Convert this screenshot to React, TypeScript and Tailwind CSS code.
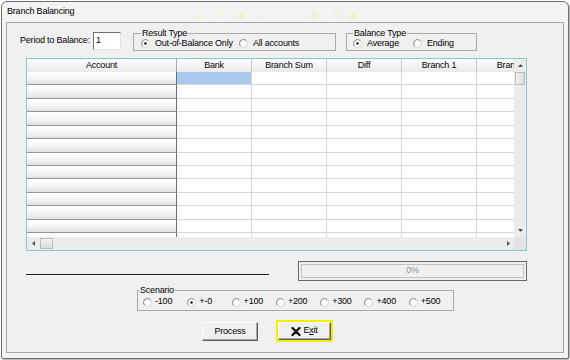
import React from "react";

const columns = ["Bank", "Branch Sum", "Diff", "Branch 1", "Branch 2"];
const rows = Array.from({ length: 13 }, (_, i) => i);
const scenarios = ["-100", "+-0", "+100", "+200", "+300", "+400", "+500"];

// classic sunken radio, dark on the top-left, light on the bottom-right
const Radio = ({ checked }: { checked?: boolean }) => (
  <svg width="9" height="9" viewBox="0 0 9 9" className="shrink-0">
    <circle cx="4.5" cy="4.5" r="3.6" fill="#fff" />
    <path d="M1.67 7.33 A4 4 0 0 1 7.33 1.67" fill="none" stroke="#7c7c7c" />
    <path d="M7.33 1.67 A4 4 0 0 1 1.67 7.33" fill="none" stroke="#d6d6d6" />
    {checked && <circle cx="4.5" cy="4.5" r="1.3" fill="#1c1c1c" />}
  </svg>
);

const Group = ({
  title,
  className,
  children,
}: {
  title: string;
  className: string;
  children: React.ReactNode;
}) => (
  <fieldset className={`border border-[#a9a9a9] ${className}`}>
    <legend className="px-[1px] leading-[10px]">{title}</legend>
    {children}
  </fieldset>
);

const Tri = ({ dir }: { dir: "up" | "down" | "left" | "right" }) => {
  const pts = {
    up: "0,3 2.5,0 5,3",
    down: "0,0 5,0 2.5,3",
    left: "3,0 3,5 0,2.5",
    right: "0,0 0,5 3,2.5",
  }[dir];
  const vertical = dir === "up" || dir === "down";
  return (
    <svg width={vertical ? 5 : 3} height={vertical ? 3 : 5}>
      <polygon points={pts} fill="#505050" />
    </svg>
  );
};

const Grid = () => (
  <div className="ml-[19px] w-[501px] h-[193px] shrink-0 border border-[#86c8cb] bg-white flex flex-col">
    <div className="flex h-[178px]">
      <div className="w-[487px] overflow-hidden flex flex-col">
        {/* header */}
        <div className="flex h-[13px] shrink-0">
          <div className="w-[150px] shrink-0 border-r border-[#a8a8a8] bg-linear-to-b from-white to-[#e9e9e9] text-center leading-[13px]">
            Account
          </div>
          {columns.map((c) => (
            <div
              key={c}
              className="w-[75px] shrink-0 border-r border-[#c8c8c8] bg-linear-to-b from-white to-[#e9e9e9] text-center leading-[13px] whitespace-nowrap"
            >
              {c}
            </div>
          ))}
        </div>
        {rows.map((r) => (
          <div key={r} className="flex h-[13.43px] shrink-0">
            <div className="w-[150px] shrink-0 border-r border-r-[#6c6c6c] border-b border-b-[#949494] bg-linear-to-b from-white via-[#f6f6f6] to-[#e2e2e2]" />
            {columns.map((c, i) => (
              <div
                key={c}
                className={`w-[75px] shrink-0 border-r border-b border-[#d6d6d6] ${
                  r === 0 && i === 0 ? "bg-[#a8c8ec]" : "bg-white"
                }`}
              />
            ))}
          </div>
        ))}
      </div>
      {/* vertical scrollbar */}
      <div className="w-[12px] bg-[#ececec] flex flex-col">
        <div className="h-[13px] flex items-center justify-center">
          <Tri dir="up" />
        </div>
        <div className="h-[13px] mx-[1px] border border-[#bcbcbc] bg-linear-to-r from-[#f2f2f2] to-[#dcdcdc]" />
        <div className="flex-1" />
        <div className="h-[13px] flex items-center justify-center">
          <Tri dir="down" />
        </div>
      </div>
    </div>
    {/* horizontal scrollbar */}
    <div className="flex h-[13px] bg-[#ececec]">
      <div className="w-[12px] flex items-center justify-center">
        <Tri dir="left" />
      </div>
      <div className="ml-[1px] w-[13px] my-[1px] border border-[#bcbcbc] bg-linear-to-b from-[#f2f2f2] to-[#dcdcdc]" />
      <div className="flex-1" />
      <div className="w-[12px] flex items-center justify-center">
        <Tri dir="right" />
      </div>
      <div className="w-[12px] bg-[#e4e4e4]" />
    </div>
  </div>
);

const RaisedButton = ({ className, children }: { className: string; children: React.ReactNode }) => (
  <div
    className={`bg-[#f0f0f0] border border-t-[#fcfcfc] border-l-[#fcfcfc] border-r-[#5e5e5e] border-b-[#5e5e5e] shadow-[inset_-1px_-1px_0_#a3a3a3] flex items-center justify-center ${className}`}
  >
    {children}
  </div>
);

export default function App() {
  return (
    <div className="w-[570px] h-[360px] bg-white overflow-hidden font-['Liberation_Sans',Arial,sans-serif] text-[9px] tracking-[-0.2px] text-black">
      <div className="ml-[1px] mt-[1px] w-[568px] h-[358px] border border-[#6e6e6e] rounded-t-[6px] rounded-b-[2px] bg-[#f3f3f3] shadow-[1px_1px_1px_#b4b4b4] flex flex-col px-[4px] pb-[5px]">
        {/* title bar, with the faint desktop showing through the glass */}
        <div className="relative h-[20px] shrink-0 flex items-center pl-[1px]">
          <span>Branch Balancing</span>
          <span className="absolute left-[191px] top-[12px] w-[5px] h-[5px] rounded-full bg-[#f2eca8] blur-[1.5px] opacity-60" />
          <span className="absolute left-[212px] top-[9px] w-[5px] h-[5px] rounded-full bg-[#f3eeb6] blur-[1.5px] opacity-50" />
          <span className="absolute left-[232px] top-[11px] w-[6px] h-[6px] rounded-full bg-[#f1eaa2] blur-[1.5px] opacity-60" />
          <span className="absolute left-[252px] top-[13px] w-[5px] h-[5px] rounded-full bg-[#f3eeb6] blur-[1.5px] opacity-50" />
          <span className="absolute left-[305px] top-[11px] w-[6px] h-[6px] rounded-full bg-[#f1ea9e] blur-[1.5px] opacity-60" />
          <span className="absolute left-[327px] top-[8px] w-[8px] h-[8px] rounded-full border border-[#ece6b0] blur-[1px] opacity-60" />
          <span className="absolute left-[344px] top-[11px] w-[6px] h-[7px] rounded-full bg-[#f1ea9e] blur-[1.5px] opacity-60" />
        </div>

        {/* client area */}
        <div className="flex-1 border border-[#a2a8ae] bg-[#f0f0f0] flex flex-col">
          <div className="flex items-start mt-[5px] h-[23px] shrink-0">
            <div className="ml-[13px] w-[73px] h-[18px] mt-[4px] flex items-center">Period to Balance:</div>
            <div className="w-[28px] h-[18px] mt-[4px] bg-white border border-t-[#6f6f6f] border-l-[#6f6f6f] border-r-[#e2e2e2] border-b-[#e2e2e2] flex items-center pl-[2px]">
              1
            </div>
            <Group title="Result Type" className="ml-[12px] w-[203px] h-[23px] pl-[7px]">
              <div className="flex items-center h-[11px]">
                <div className="w-[98px] flex items-center gap-[5px]">
                  <Radio checked />
                  <span>Out-of-Balance Only</span>
                </div>
                <div className="flex items-center gap-[5px]">
                  <Radio />
                  <span>All accounts</span>
                </div>
              </div>
            </Group>
            <Group title="Balance Type" className="ml-[10px] w-[131px] h-[23px] pl-[6px]">
              <div className="flex items-center h-[11px]">
                <div className="w-[60px] flex items-center gap-[5px]">
                  <Radio checked />
                  <span>Average</span>
                </div>
                <div className="flex items-center gap-[5px]">
                  <Radio />
                  <span>Ending</span>
                </div>
              </div>
            </Group>
          </div>

          <div className="mt-[7px]">
            <Grid />
          </div>

          <div className="flex items-start mt-[10px] h-[20px] shrink-0">
            <div className="ml-[19px] w-[243px] mt-[13px] h-[1px] bg-[#1e1e1e] shadow-[0_1px_0_#fff]" />
            <div className="ml-[29px] w-[229px] h-[20px] border border-[#6a6a6a] p-[2px]">
              <div className="h-full border border-[#c2c2c2] bg-[#f0f0f0] flex items-center justify-center text-[#7a97aa]">
                0%
              </div>
            </div>
          </div>

          <div className="mt-[4px] shrink-0">
            <Group title="Scenario" className="ml-[130px] w-[315px] h-[26px] pl-[1px]">
              <div className="flex items-center h-[12px] mt-[1px] ml-[4px]">
                {scenarios.map((s) => (
                  <div key={s} className="w-[44.3px] shrink-0 flex items-center gap-[3px]">
                    <Radio checked={s === "+-0"} />
                    <span>{s}</span>
                  </div>
                ))}
              </div>
            </Group>
          </div>

          <div className="flex items-start mt-[9px] shrink-0">
            <RaisedButton className="ml-[195px] mt-[2px] w-[56px] h-[19px]">Process</RaisedButton>
            <div className="ml-[18px] w-[57px] h-[22px] border-2 border-[#f0f000] flex">
              <RaisedButton className="flex-1 gap-[2px]">
                <svg width="10" height="9" viewBox="0 0 10 9">
                  <path d="M1.5 1 L8.5 8 M8.5 1 L1.5 8" stroke="#111" strokeWidth="2.3" strokeLinecap="round" />
                </svg>
                <span>
                  E<span className="underline">x</span>it
                </span>
              </RaisedButton>
            </div>
          </div>
        </div>
      </div>
    </div>
  );
}
